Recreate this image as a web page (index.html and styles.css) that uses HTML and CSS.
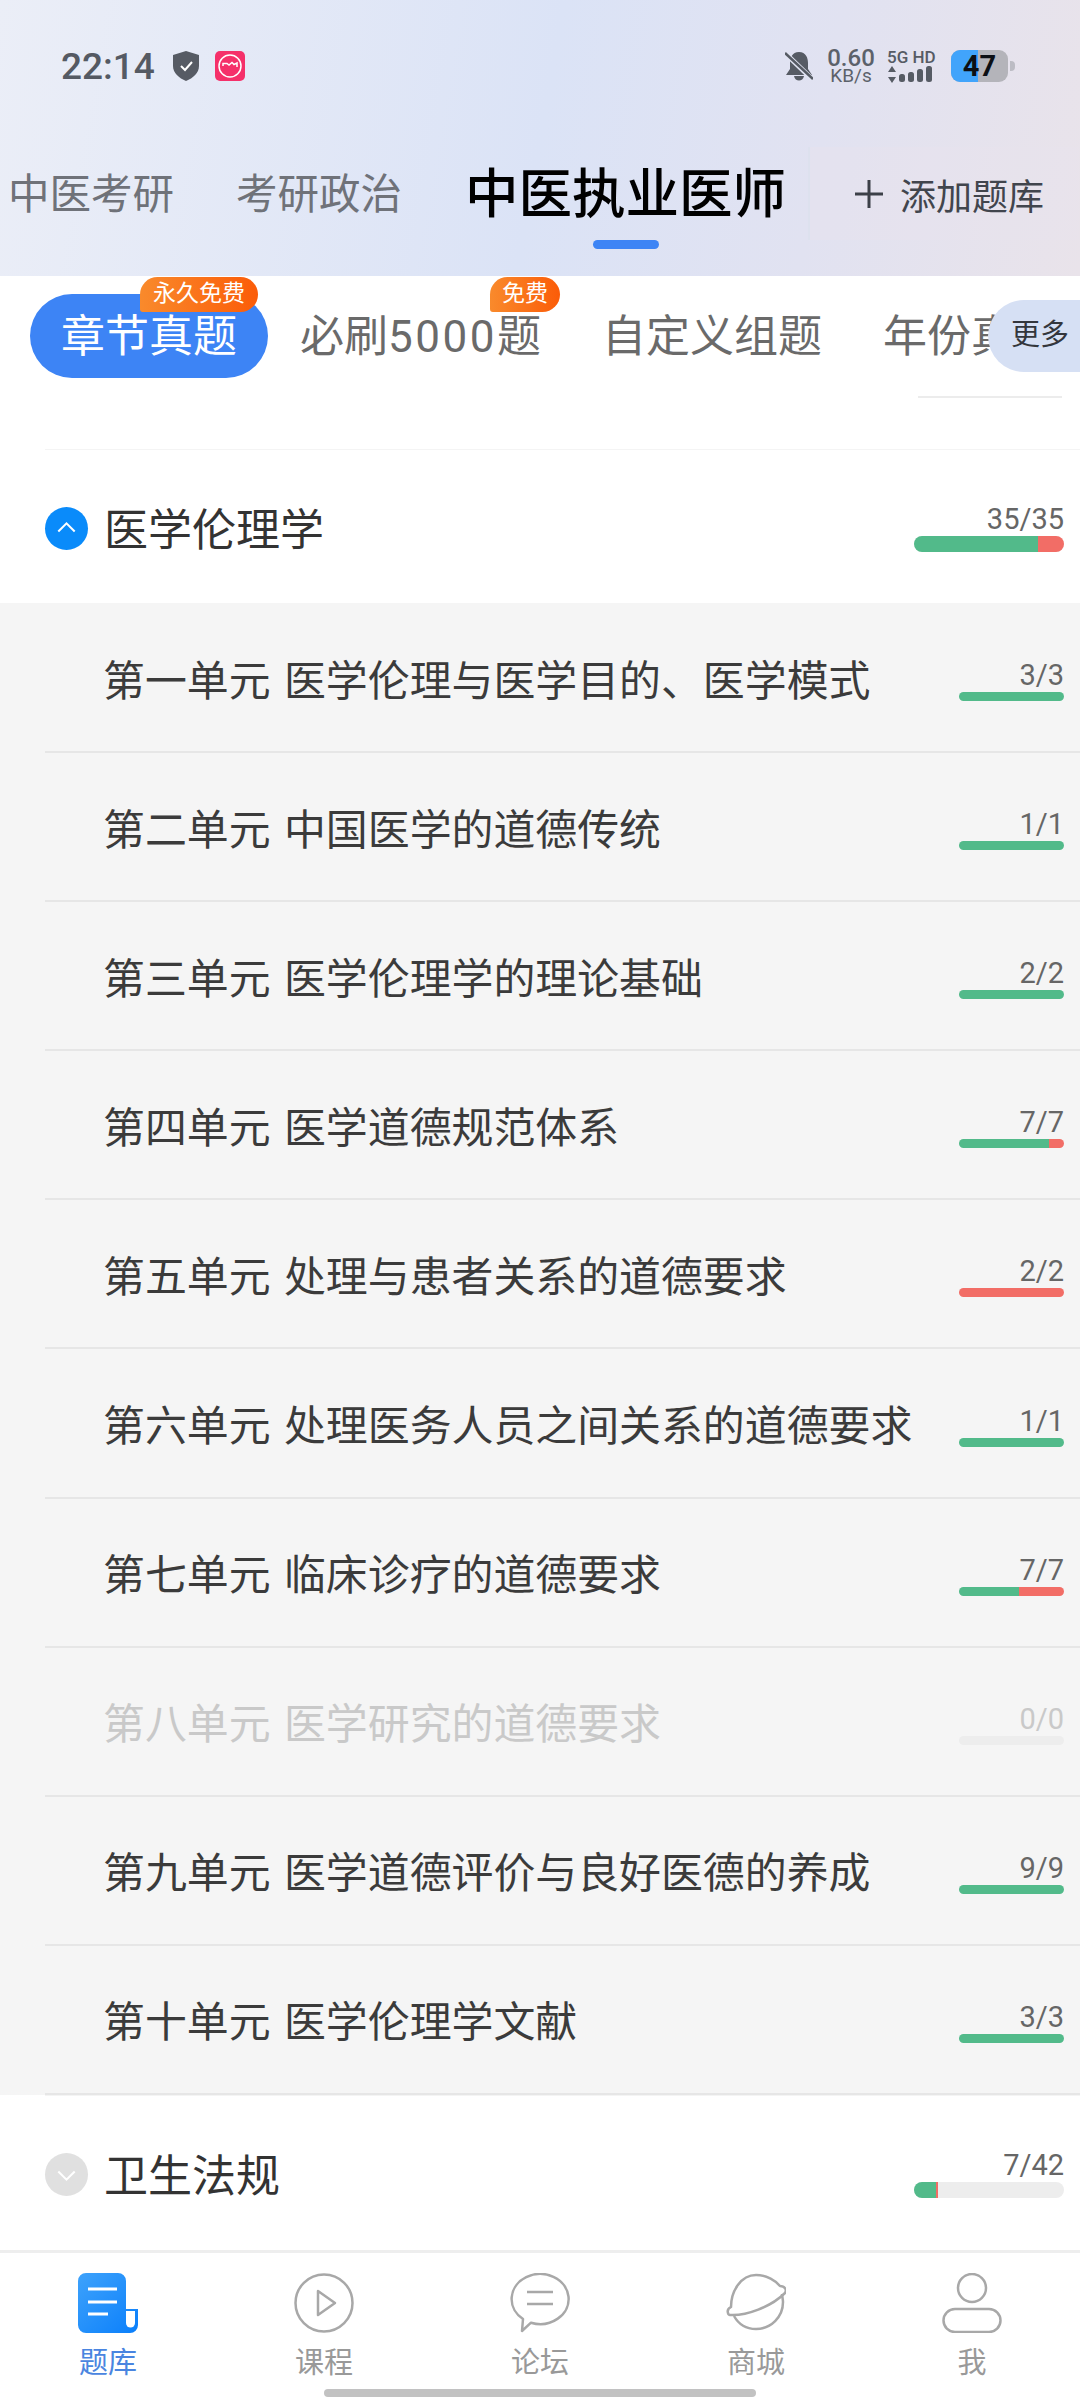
FILE: index.html
```html
<html>
<head>
    <title>题库</title>
    <link rel="stylesheet" href="styles.css">
</head>

<body>
    <div class="phone">
        <header class="top">
            <div class="status">
                <div class="status-left">
                    <span class="clock">22:14</span>
                    <svg class="shield" viewBox="0 0 26 30"><path d="M13 0 L26 4 V15 C26 22 20 27 13 30 C6 27 0 22 0 15 V4 Z" fill="#565b64"/><path d="M8 15 L12 19 L19 11" fill="none" stroke="#fff" stroke-width="2"/></svg>
                    <svg class="app" viewBox="0 0 30 30"><rect width="30" height="30" rx="5" fill="#f5306a"/><circle cx="15" cy="15" r="11" fill="none" stroke="#fff" stroke-width="1.5"/><path d="M8 15 V12.5 H12 L14 14 L17 11.5 L19 13.5 L22 12 V16" fill="none" stroke="#fff" stroke-width="1.5"/></svg>
                </div>
                <div class="status-right">
                    <svg class="bell" viewBox="0 0 28 30"><path d="M14 1 C7 1 5 7 5 12 V18 L1 24 H27 L23 18 V12 C23 7 21 1 14 1 Z M9 25 C10 31 18 31 19 25 Z" fill="#565b64"/><path d="M1 3 L27 28" stroke="#e2e5f3" stroke-width="5"/><path d="M0 2 L28 28" stroke="#565b64" stroke-width="2.5"/></svg>
                    <div class="speed"><span class="speed-num">0.60</span><span class="speed-unit">KB/s</span></div>
                    <div class="signal">
                        <span class="net">5G HD</span>
                        <svg class="bars" viewBox="0 0 48 17"><path d="M5 0 L9 6 H1 Z M5 17 L1 11 H9 Z" fill="#565b64"/><rect x="12" y="8" width="6" height="8" rx="2.5" fill="#565b64"/><rect x="21" y="6" width="6" height="10" rx="2.5" fill="#565b64"/><rect x="30" y="3" width="6" height="13" rx="2.5" fill="#565b64"/><rect x="39" y="0" width="6" height="16" rx="2.5" fill="#565b64"/></svg>
                    </div>
                    <div class="battery"><span class="battery-fill"></span><span class="battery-num">47</span></div>
                    <span class="battery-nub"></span>
                </div>
            </div>

            <nav class="tabs">
                <a class="tab">中医考研</a>
                <a class="tab">考研政治</a>
                <a class="tab active">中医执业医师</a>
                <div class="add">
                    <svg class="plus" viewBox="0 0 28 28"><path d="M14 0 V28 M0 14 H28" stroke="#3c4048" stroke-width="3"/></svg>
                    <span>添加题库</span>
                </div>
            </nav>
        </header>

        <div class="chips">
            <div class="chip current">章节真题<span class="badge long">永久免费</span></div>
            <div class="chip">必刷<span class="chip-num">5000</span>题<span class="badge short">免费</span></div>
            <div class="chip">自定义组题</div>
            <div class="chip">年份真题</div>
            <div class="more">更多</div>
        </div>

        <div class="stub"><span></span></div>

        <main class="list">
            <section class="group">
                <span class="toggle open"><svg viewBox="0 0 42 42"><path d="M13 24 L21 16 L29 24" fill="none" stroke="#fff" stroke-width="2"/></svg></span>
                <h2>医学伦理学</h2>
                <div class="meter">
                    <span class="count">35/35</span>
                    <div class="bar big"><i class="ok" style="width: 82.5%"></i><i class="bad" style="width: 17.5%"></i></div>
                </div>
            </section>

            <div class="units">
                <div class="unit">
                    <span class="unit-name">第一单元 医学伦理与医学目的、医学模式</span>
                    <div class="meter"><span class="count">3/3</span><div class="bar"><i class="ok" style="width: 100%"></i></div></div>
                </div>
                <div class="unit">
                    <span class="unit-name">第二单元 中国医学的道德传统</span>
                    <div class="meter"><span class="count">1/1</span><div class="bar"><i class="ok" style="width: 100%"></i></div></div>
                </div>
                <div class="unit">
                    <span class="unit-name">第三单元 医学伦理学的理论基础</span>
                    <div class="meter"><span class="count">2/2</span><div class="bar"><i class="ok" style="width: 100%"></i></div></div>
                </div>
                <div class="unit">
                    <span class="unit-name">第四单元 医学道德规范体系</span>
                    <div class="meter"><span class="count">7/7</span><div class="bar"><i class="ok" style="width: 86%"></i><i class="bad" style="width: 14%"></i></div></div>
                </div>
                <div class="unit">
                    <span class="unit-name">第五单元 处理与患者关系的道德要求</span>
                    <div class="meter"><span class="count">2/2</span><div class="bar"><i class="bad" style="width: 100%"></i></div></div>
                </div>
                <div class="unit">
                    <span class="unit-name">第六单元 处理医务人员之间关系的道德要求</span>
                    <div class="meter"><span class="count">1/1</span><div class="bar"><i class="ok" style="width: 100%"></i></div></div>
                </div>
                <div class="unit">
                    <span class="unit-name">第七单元 临床诊疗的道德要求</span>
                    <div class="meter"><span class="count">7/7</span><div class="bar"><i class="ok" style="width: 57%"></i><i class="bad" style="width: 43%"></i></div></div>
                </div>
                <div class="unit empty">
                    <span class="unit-name">第八单元 医学研究的道德要求</span>
                    <div class="meter"><span class="count">0/0</span><div class="bar"></div></div>
                </div>
                <div class="unit">
                    <span class="unit-name">第九单元 医学道德评价与良好医德的养成</span>
                    <div class="meter"><span class="count">9/9</span><div class="bar"><i class="ok" style="width: 100%"></i></div></div>
                </div>
                <div class="unit">
                    <span class="unit-name">第十单元 医学伦理学文献</span>
                    <div class="meter"><span class="count">3/3</span><div class="bar"><i class="ok" style="width: 100%"></i></div></div>
                </div>
            </div>

            <section class="group">
                <span class="toggle"><svg viewBox="0 0 42 42"><path d="M13 18 L21 26 L29 18" fill="none" stroke="#fff" stroke-width="2"/></svg></span>
                <h2>卫生法规</h2>
                <div class="meter">
                    <span class="count">7/42</span>
                    <div class="bar big"><i class="ok" style="width: 14.5%"></i><i class="bad" style="width: 1.5%"></i></div>
                </div>
            </section>
        </main>

        <footer class="tabbar">
            <div class="nav-item active">
                <svg viewBox="0 0 60 60">
                    <defs><linearGradient id="bookfill" x1="0" y1="0" x2="1" y2="1"><stop offset="0" stop-color="#3ea2fb"/><stop offset="1" stop-color="#0a7ffb"/></linearGradient></defs>
                    <path d="M8 0 H40 A8 8 0 0 1 48 8 V36 H60 V52 A8 8 0 0 1 52 60 H8 A8 8 0 0 1 0 52 V8 A8 8 0 0 1 8 0 Z" fill="url(#bookfill)"/>
                    <path d="M10 16 H39 M10 29 H39 M10 41 H30" stroke="#fff" stroke-width="3"/>
                    <path d="M48 38 H57 V50 A4.5 4.5 0 0 1 48 50 Z" fill="#fff"/>
                </svg>
                <span>题库</span>
            </div>
            <div class="nav-item">
                <svg viewBox="0 0 60 60"><circle cx="30" cy="30" r="28.5" fill="none" stroke="#a8a8a8" stroke-width="2.5"/><path d="M24 18 L41 30 L24 42 Z" fill="none" stroke="#a8a8a8" stroke-width="2.5" stroke-linejoin="round"/></svg>
                <span>课程</span>
            </div>
            <div class="nav-item">
                <svg viewBox="0 0 60 60"><path d="M13 46 A28.5 25 0 1 1 21 49.7 L12 58 Z" fill="none" stroke="#a8a8a8" stroke-width="2.5" stroke-linejoin="round"/><path d="M17 19 H43 M17 31 H43" stroke="#a8a8a8" stroke-width="2.5"/></svg>
                <span>论坛</span>
            </div>
            <div class="nav-item">
                <svg viewBox="0 0 60 60"><path d="M2 40 C1 37 3 35 5 34 C5 18 15 2 30 2 C41 2 50 8 54 13 C59 13 61 17 59 20 C45 34 20 43 4 42 C3 42 2 41 2 40 Z" fill="none" stroke="#a8a8a8" stroke-width="2.5" stroke-linejoin="round"/><path d="M8 43 C13 52 21 56 30 56 C45 56 57 44 57 29 C57 26 56 23 56 21" fill="none" stroke="#a8a8a8" stroke-width="2.5"/></svg>
                <span>商城</span>
            </div>
            <div class="nav-item">
                <svg viewBox="0 0 60 60"><circle cx="30" cy="15" r="14" fill="none" stroke="#a8a8a8" stroke-width="2.5"/><rect x="1.5" y="36" width="57" height="23" rx="11.5" fill="none" stroke="#a8a8a8" stroke-width="2.5"/></svg>
                <span>我</span>
            </div>
            <div class="home-bar"></div>
        </footer>
    </div>
</body>
</html>
```

FILE: styles.css
```css
* {
    box-sizing: border-box;
}

html, body {
    margin: 0;
    padding: 0;
}

body {
    font-family: Roboto, "Noto Sans CJK SC", sans-serif;
    background: #fff;
    color: #333;
}

.phone {
    width: 1080px;
    height: 2400px;
    overflow: hidden;
    display: flex;
    flex-direction: column;
}

/* header */
.top {
    height: 276px;
    background: linear-gradient(100deg, #ebeef7 0%, #dbe3f6 50%, #e1e2f1 75%, #e9e3ea 100%);
}

.status {
    height: 132px;
    padding: 50px 65px 0 61px;
    display: flex;
    justify-content: space-between;
    align-items: flex-start;
}

.status-left, .status-right {
    height: 32px;
    display: flex;
    align-items: center;
}

.clock {
    font-size: 37px;
    font-weight: 500;
    color: #555a63;
    width: 112px;
}

.shield {
    width: 26px;
    height: 30px;
    margin-right: 16px;
}

.app {
    width: 30px;
    height: 30px;
}

.bell {
    width: 28px;
    height: 30px;
    margin-right: 13px;
}

.speed {
    width: 50px;
    display: flex;
    flex-direction: column;
    align-items: center;
    color: #5c616a;
    margin-right: 11px;
}

.speed-num {
    font-size: 24px;
    line-height: 19px;
    font-weight: 500;
}

.speed-unit {
    font-size: 19px;
    line-height: 15px;
}

.signal {
    width: 50px;
    display: flex;
    flex-direction: column;
    margin-right: 14px;
}

.net {
    font-size: 17px;
    line-height: 17px;
    font-weight: 500;
    color: #565b64;
    white-space: nowrap;
}

.bars {
    width: 48px;
    height: 17px;
}

.battery {
    position: relative;
    width: 57px;
    height: 32px;
    border-radius: 9px;
    background: #b4b4ba;
    overflow: hidden;
    display: flex;
    align-items: center;
    justify-content: center;
}

.battery-fill {
    position: absolute;
    left: 0;
    top: 0;
    bottom: 0;
    width: 27px;
    background: #41a4fb;
}

.battery-num {
    position: relative;
    font-size: 29px;
    font-weight: 700;
    color: #0c0f14;
}

.battery-nub {
    width: 5px;
    height: 10px;
    margin-left: 2px;
    background: #bcbcc4;
    border-radius: 0 4px 4px 0;
}

.tabs {
    height: 144px;
    padding-left: 8px;
    display: flex;
    align-items: flex-start;
    white-space: nowrap;
}

.tab {
    position: relative;
    flex-shrink: 0;
    font-size: 41.5px;
    line-height: 60px;
    margin-right: 62px;
    margin-top: 33px;
    color: #6f7279;
}

.tab.active {
    font-size: 53.5px;
    font-weight: 500;
    color: #000;
    margin-right: 0;
    margin-left: 1px;
}

.tab.active::after {
    content: "";
    position: absolute;
    left: 128px;
    top: 75px;
    width: 66px;
    height: 9px;
    border-radius: 5px;
    background: #3d84f5;
}

.add {
    flex-shrink: 0;
    margin-left: 22px;
    margin-top: 15px;
    width: 271px;
    height: 93px;
    padding-left: 45px;
    border-left: 2px solid #dde1ee;
    background: rgba(232, 228, 238, 0.4);
    display: flex;
    align-items: center;
    font-size: 36px;
    color: #41454d;
}

.plus {
    width: 28px;
    height: 28px;
    margin-right: 17px;
}

/* chips */
.chips {
    position: relative;
    height: 120px;
    padding-left: 30px;
    display: flex;
    align-items: flex-start;
    overflow: hidden;
    white-space: nowrap;
}

.chip {
    position: relative;
    flex-shrink: 0;
    height: 84px;
    margin-top: 18px;
    margin-right: 61px;
    font-size: 44px;
    line-height: 86px;
    color: #6a6a6a;
}

.chip-num {
    letter-spacing: 2.5px;
}

.chip.current {
    width: 238px;
    margin-right: 32px;
    text-align: center;
    color: #fff;
    background: #3d84f5;
    border-radius: 42px;
}

.badge {
    position: absolute;
    top: -17px;
    height: 35px;
    font-size: 23px;
    line-height: 33px;
    text-align: center;
    color: #fff;
    background: linear-gradient(90deg, #f98a2c, #fb5c08);
    border-radius: 18px 18px 18px 3px;
}

.badge.long {
    left: 110px;
    width: 118px;
}

.badge.short {
    left: 190px;
    width: 70px;
}

.more {
    position: absolute;
    right: 0;
    top: 24px;
    width: 92px;
    height: 72px;
    padding-left: 23px;
    border-radius: 36px 0 0 36px;
    background: #d6e0f4;
    font-size: 29px;
    line-height: 70px;
    color: #33363c;
}

.stub {
    height: 53px;
    padding-left: 918px;
}

.stub span {
    display: block;
    width: 144px;
    height: 2px;
    background: #ececec;
}

/* list */
.list {
    flex: 1;
    display: flex;
    flex-direction: column;
}

.group {
    height: 154px;
    margin-left: 45px;
    padding-right: 16px;
    border-top: 1px solid #f4f4f4;
    display: flex;
    align-items: center;
}

.group h2 {
    flex: 1;
    margin: 1px 0 0 16px;
    font-size: 44px;
    font-weight: 400;
    color: #333;
}

.toggle {
    width: 43px;
    height: 43px;
    margin-top: 4px;
    border-radius: 50%;
    background: #e0e0e0;
}

.toggle.open {
    background: #0a8bfa;
}

.toggle svg {
    display: block;
    width: 43px;
    height: 43px;
}

.units {
    background: #f5f5f5;
    height: 1492px;
    padding-top: 1px;
}

.unit {
    height: 149.1px;
    margin-left: 45px;
    padding: 4px 16px 0 58px;
    border-bottom: 2px solid #e6e6e6;
    display: flex;
    align-items: center;
    justify-content: space-between;
}

.unit-name {
    margin-bottom: 5px;
    font-size: 41.9px;
    word-spacing: 3px;
    color: #3b3b3b;
}

.meter {
    display: flex;
    flex-direction: column;
    align-items: flex-end;
}

.count {
    font-size: 29px;
    line-height: 34px;
    color: #666;
}

.bar {
    width: 105px;
    height: 9px;
    border-radius: 5px;
    background: #ededed;
    overflow: hidden;
    display: flex;
}

.bar.big {
    width: 150px;
    height: 16px;
    border-radius: 8px;
}

.bar i {
    display: block;
    height: 100%;
}

.ok {
    background: #52ba8a;
}

.bad {
    background: #f26d66;
}

.unit.empty .unit-name {
    color: #c9c9c9;
}

.unit.empty .count {
    color: #c9c9c9;
}

/* bottom nav */
.tabbar {
    position: relative;
    height: 150px;
    border-top: 3px solid #eeeeee;
    display: flex;
    background: #fff;
}

.nav-item {
    width: 216px;
    padding-top: 20px;
    display: flex;
    flex-direction: column;
    align-items: center;
    font-size: 29px;
    color: #999;
}

.nav-item svg {
    display: block;
    width: 60px;
    height: 60px;
}

.nav-item span {
    margin-top: 10px;
    line-height: 40px;
}

.nav-item.active {
    color: #4a85e0;
}

.home-bar {
    position: absolute;
    left: 324px;
    bottom: 3px;
    width: 432px;
    height: 8px;
    border-radius: 4px;
    background: #c2c2c2;
}
```
